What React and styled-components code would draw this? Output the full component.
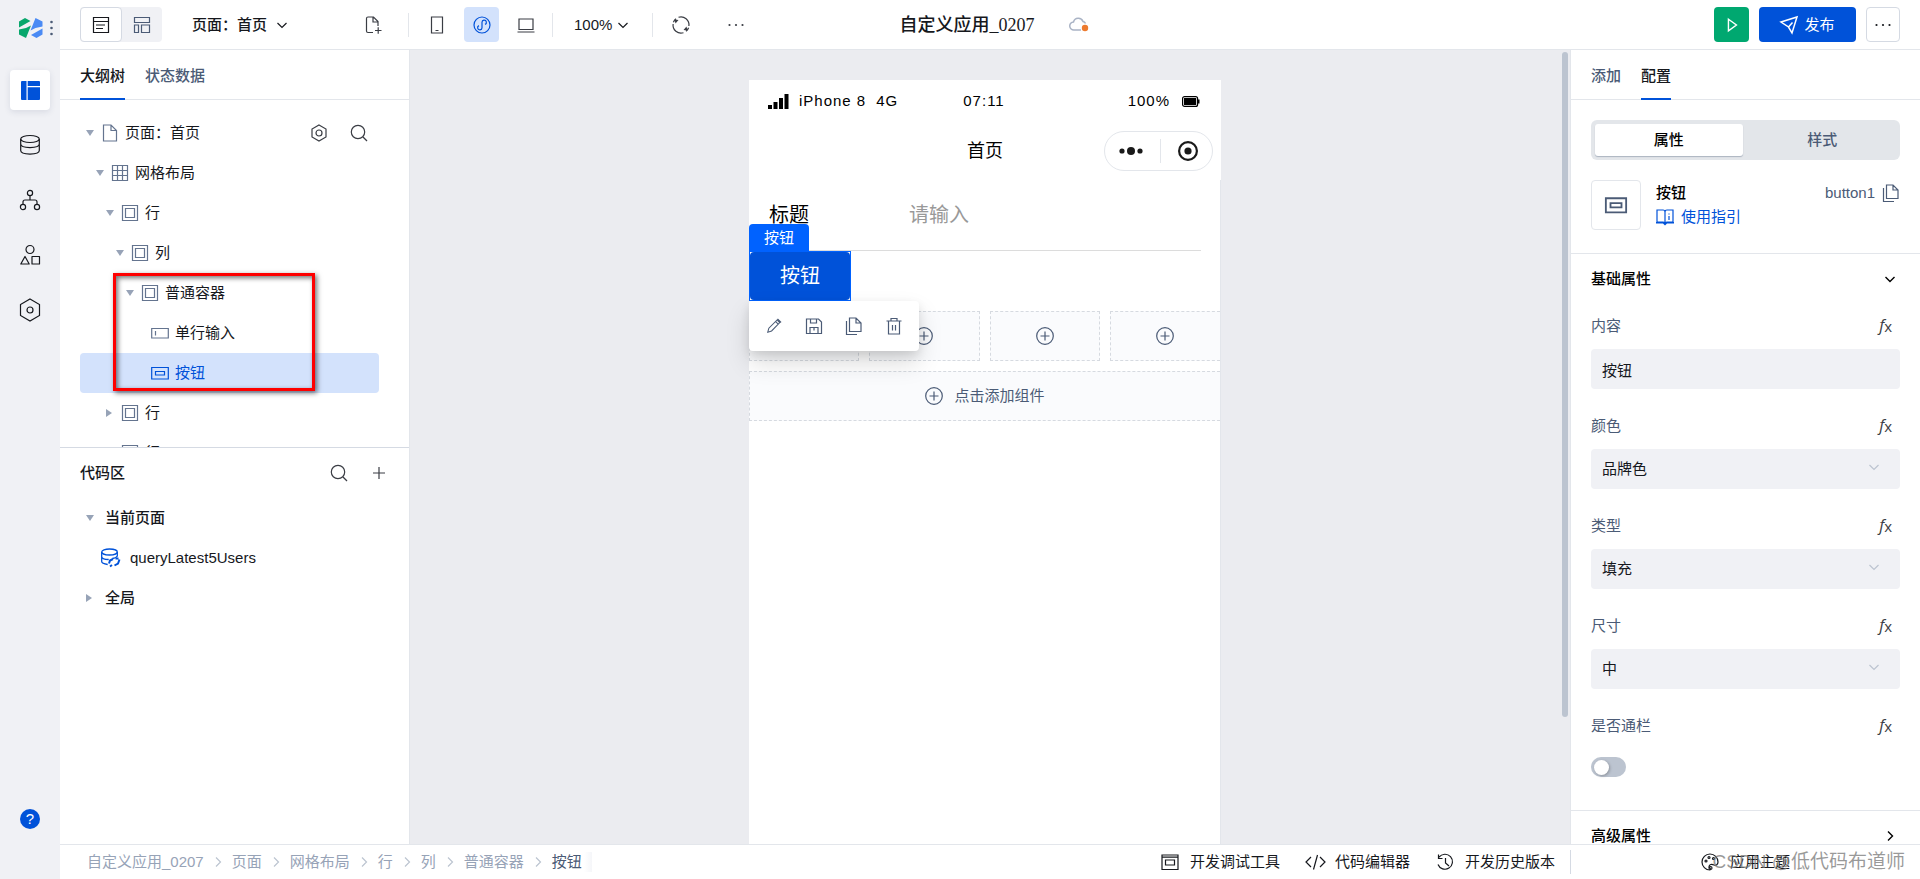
import React, { useState } from "react"
import styled, { createGlobalStyle, css } from "styled-components"

const blue = "#0052d9"
const ink = "#16181d"
const slate = "#4b5b76"
const line = "#e3e6eb"
const soft = "#f0f1f5"

const GlobalStyle = createGlobalStyle`
  * {
    box-sizing: border-box;
  }
  body {
    margin: 0;
    overflow: hidden;
    background: #fff;
    color: ${ink};
    font: 15px/20px "Liberation Sans", "Noto Sans CJK SC", sans-serif;
  }
  button, input, select {
    font: inherit;
    color: inherit;
  }
  a {
    color: inherit;
    text-decoration: none;
  }
`

/* ---------- icons ---------- */

const Svg = styled.svg`
  display: block;
  flex: none;
  fill: none;
  stroke: currentColor;
  stroke-width: ${props => props.$stroke || 1.2};
  overflow: visible;
`

const shapes = {
  outline: <path d="M1.500 1.500h15v15h-15zM1.500 5.500h15M4 9h9M4 12.500h7" />,
  blocks: <path d="M1.500 1.500h15v5h-15zM1.500 9h4v7.500h-4zM8.500 9h8v7.500h-8z" />,
  down: <path d="M4.500 7l4.500 4.500L13.500 7" />,
  right: <path d="M7 4.500l4.500 4.500L7 13.500" />,
  filePlus: <path d="M9 16.500H4q-1.500 0-1.500-1.500V2.500Q2.500 1 4 1h5.500L14 5.500V10M9 1v5h5M11 14.500h6.500M14.200 11.200v6.500" />,
  phone: <path d="M3.500 1h11v16h-11zM7.500 14.500h3" />,
  mini: <><circle cx="9" cy="9" r="8" /><path d="M9 11.500V6.300a2.200 2.200 0 1 1 3 2.100M9 6.500v5.200a2.200 2.200 0 1 1-3-2.100" /></>,
  laptop: <path d="M2 3h14v10.500H2zM.5 16h17" />,
  refresh: <><path d="M6.500 1.300a8 8 0 0 1 10.400 8.700M11.500 16.700A8 8 0 0 1 1.100 8" /><path d="M4 2.700a8 8 0 0 0-2.600 3.600M14 15.300a8 8 0 0 0 2.600-3.600" /><path d="M2.500 3.500l4 .5-3 3.500zM15.500 14.500l-4-.5 3-3.500z" fill="currentColor" stroke="none" /></>,
  dots: <g fill="currentColor" stroke="none"><circle cx="2.500" cy="9" r="1.100" /><circle cx="9" cy="9" r="1.100" /><circle cx="15.500" cy="9" r="1.100" /></g>,
  play: <path d="M5 2.500L14 9l-9 6.500z" />,
  send: <path d="M1 6L17 1l-5 16-3.500-6zM8.500 11l4-4.500" />,
  panel: <path d="M1 0h4.500v19H1q-1 0-1-1V1q0-1 1-1zM6.700 0H18q1 0 1 1v4H6.700zM6.700 6.200H19V18q0 1-1 1H6.700z" fill="currentColor" stroke="none" />,
  database: <><ellipse cx="10" cy="4" rx="9.300" ry="3.500" /><path d="M.7 4v11.500c0 4.700 18.600 4.700 18.600 0V4M.7 9c0 4.700 18.600 4.700 18.600 0" /></>,
  flow: <><circle cx="10" cy="3" r="2.600" /><circle cx="3" cy="17" r="2.600" /><circle cx="17" cy="17" r="2.600" /><path d="M10 5.600V10M3 14.400V12q0-2 2-2h10q2 0 2 2v2.400" /></>,
  forms: <><circle cx="10" cy="4.500" r="4" /><path d="M5 11.500L.8 19h8.400zM12 11.500h7.500v7.500H12z" strokeLinejoin="round" /></>,
  hex: <><path d="M9 1l7 4v8l-7 4-7-4V5z" /><circle cx="9" cy="9" r="3" /></>,
  bigHex: <><path d="M10-1l9.500 5.500v11L10 21 .5 15.500v-11z" /><circle cx="10" cy="10" r="3" /></>,
  search: <><circle cx="8" cy="8" r="6.700" /><path d="M13 13l4 4" /></>,
  plus: <path d="M9 3v12M3 9h12" />,
  file: <path d="M2.500 1H10l5.500 5.500V17h-13zM10 1v5.500h5.500" />,
  grid: <path d="M1.500 1.500h15v15h-15zM1.500 6.500h15M1.500 11.500h15M6.500 1.500v15M11.500 1.500v15" />,
  box: <path d="M1.500 1.500h15v15h-15zM4.500 4.500h9v9h-9z" />,
  field: <path d="M.7 4.500h16.600v9.500H.7zM4.500 7v4.500" />,
  button: <path d="M.7 3.500h16.600v11.500H.7zM4.500 7.500h9v3.500h-9z" />,
  pencil: <path d="M2 16l1.200-4.500L12.500 2.200l3 3L6.300 14.600zM10.800 4l3 3M13 1l4 4" />,
  save: <path d="M1.500 2h12l3 3v11.500h-15zM5.500 2v4h6V2M5 16.500V10.500h8v6M9 10.500v3" />,
  copy: <path d="M4.500 1H11l5 5v8.500H4.500zM11 1v5h5M1.500 4v13.500H12" />,
  trash: <path d="M1.500 4h15M3.500 4v13h11V4M6 4V1.500h6V4M7.500 8v5.500M10.500 8v5.500" />,
  circlePlus: <><circle cx="9" cy="9" r="8.300" /><path d="M9 4.500v9M4.500 9h9" /></>,
  guide: <><path d="M1 2h6q2 0 2 2 0-2 2-2h6v12h-6q-2 0-2 2 0-2-2-2H1zM9 4v11M13 8v4M13 5.500v1" /><path d="M0 14h18v1.500h-7l-2 2-2-2H0z" fill="currentColor" stroke="none" /></>,
  debug: <path d="M1 2h16v14.500H1zM4.500 7h9v5h-9zM1 4.200h16" />,
  code: <path d="M5 4L0 9l5 5M14 4l5 5-5 5M11.500 2l-4 14.500" />,
  history: <path d="M3 4.200a7.500 7.500 0 1 1-1 7.300M2.500 1.500v4h4M9.500 5v5l3.500 3" />,
  palette: <><path d="M9 1a8 8 0 1 0 0 16c.8-1 .2-2.500-1-3 0-3 3-3 5-2 2 .8 4-.5 4-3A8 8 0 0 0 9 1z" /><circle cx="5" cy="8" r="1" /><circle cx="8" cy="4.500" r="1" /><circle cx="12.500" cy="5.500" r="1" /><circle cx="9.500" cy="15" r="1.500" /></>,
}

const Icon = ({ name, size = 18, stroke, box = 18 }) => (
  <Svg width={size} height={size} viewBox={`0 0 ${box} ${box}`} $stroke={stroke} aria-hidden="true">
    {shapes[name]}
  </Svg>
)

const Logo = () => (
  <svg width="24" height="20" viewBox="0 0 24 20" aria-hidden="true">
    <path d="M0 3.500L6 0l5.500 3L0 9.500zM0 11.500L7 10l5-2.500L7 20l-7-3.500z" fill="#07a76c" />
    <path d="M23.500 16.500L17.500 20 12 17l11.500-6.500zM23.500 8.500l-7 1.500-5 2.500L16.500 0l7 3.500z" fill="#4a8af4" />
  </svg>
)

/* ---------- shell ---------- */

const Shell = styled.div`
  display: flex;
  height: 100vh;
`

const Rail = styled.nav`
  display: flex;
  flex: 0 0 60px;
  flex-direction: column;
  align-items: center;
  gap: 15px;
  padding-bottom: 40px;
  background: ${soft};
`

const Brand = styled.div`
  display: flex;
  align-items: center;
  align-self: stretch;
  gap: 7px;
  height: 55px;
  padding-left: 19px;
`

const RailButton = styled.button`
  display: grid;
  place-items: center;
  width: 40px;
  height: 40px;
  padding: 0;
  border: 0;
  border-radius: 4px;
  background: ${props => (props.$active ? "#fff" : "transparent")};
  box-shadow: ${props => (props.$active ? "0 2px 6px rgba(40, 60, 100, 0.12)" : "none")};
  color: ${props => (props.$active ? blue : ink)};
`

const HelpButton = styled(RailButton)`
  margin-top: auto;
  span {
    width: 20px;
    height: 20px;
    border-radius: 50%;
    background: ${blue};
    color: #fff;
  }
`

const Main = styled.div`
  display: flex;
  flex: 1;
  flex-direction: column;
  min-width: 0;
`

const Workspace = styled.div`
  display: flex;
  flex: 1;
  min-height: 0;
`

/* ---------- top bar ---------- */

const TopBar = styled.header`
  display: grid;
  grid-template-columns: 1fr auto 1fr;
  align-items: center;
  height: 50px;
  padding: 0 20px;
  border-bottom: 1px solid ${line};
`

const Tools = styled.div`
  display: flex;
  align-items: center;
  justify-content: ${props => (props.$end ? "flex-end" : "flex-start")};
  gap: ${props => props.$gap || 0}px;
`

const ViewSwitch = styled.div`
  display: flex;
  margin-right: 30px;
  border-radius: 4px;
  background: ${soft};
`

const ToolButton = styled.button`
  display: flex;
  align-items: center;
  justify-content: center;
  gap: 6px;
  width: ${props => props.$width || 35}px;
  height: 35px;
  padding: 0;
  border: 1px solid ${props => (props.$framed ? "#d5dae3" : "transparent")};
  border-radius: 4px;
  background: ${props => props.$fill || "transparent"};
  color: ${props => props.$color || ink};
`

const MenuButton = styled.button`
  display: flex;
  align-items: center;
  gap: ${props => props.$gap}px;
  padding: 0;
  border: 0;
  background: none;
  font-weight: ${props => (props.$strong ? 500 : 400)};
`

const Divider = styled.span`
  width: 1px;
  height: 24px;
  margin: 0 ${props => props.$right || 0}px 0 ${props => props.$left || 0}px;
  background: ${line};
`

const Spacer = styled.span`
  flex: 0 1 70px;
`

const Title = styled.h1`
  display: flex;
  align-items: center;
  gap: 34px;
  margin: 0;
  padding-left: 8px;
  font-family: "Liberation Serif", "Noto Sans CJK SC", serif;
  font-size: 18px;
  font-weight: 500;
`

/* ---------- outline panel ---------- */

const LeftPanel = styled.aside`
  display: flex;
  flex: 0 0 350px;
  flex-direction: column;
  border-right: 1px solid ${line};
`

const PanelHalf = styled.section`
  display: flex;
  flex: 1 1 0;
  flex-direction: column;
  min-height: 0;
  overflow: hidden;
  & + & {
    border-top: 1px solid #d5dae3;
  }
`

const Tabs = styled.div`
  display: flex;
  flex: none;
  gap: 20px;
  height: 50px;
  padding: 0 20px;
  border-bottom: 1px solid ${line};
`

const Tab = styled.button`
  height: 50px;
  padding: 4px 0 0;
  border: 0;
  border-bottom: 2px solid ${props => (props.$active ? blue : "transparent")};
  background: none;
  color: ${props => (props.$active ? ink : slate)};
  font-weight: 500;
`

const Tree = styled.ul`
  position: relative;
  margin: 0;
  padding: ${props => props.$top || 0}px 30px 0 20px;
  list-style: none;
`

const TreeRow = styled.li`
  display: flex;
  align-items: center;
  height: 40px;
  padding-left: ${props => 5 + props.$level * 10}px;
  padding-right: 8px;
  border-radius: 4px;
  color: ${props => (props.$selected ? blue : ink)};
  font-weight: ${props => (props.$strong ? 500 : 400)};
  ${props => props.$selected && css`
    background: #d3e2fc;
  `}
`

const RowIcon = styled.span`
  display: grid;
  place-items: center;
  width: 18px;
  margin: 0 6px;
  color: ${props => (props.$selected ? blue : "#64748f")};
`

const RowLabel = styled.span`
  flex: 1;
  margin-left: ${props => props.$indent || 0}px;
`

const Caret = styled.span`
  flex: none;
  width: 0;
  margin: 0 1px;
  border: solid transparent;
  border-width: 6px 4px 0;
  border-top-color: #97a3b7;
  ${props => props.$state === "closed" && css`
    margin: 0 3px 0 1px;
    border-width: 4px 0 4px 6px;
    border-color: transparent transparent transparent #97a3b7;
  `}
  ${props => props.$state === "leaf" && css`
    visibility: hidden;
  `}
`

const IconButton = styled.button`
  display: grid;
  place-items: center;
  width: ${props => props.$size || 24}px;
  height: 24px;
  padding: 0;
  border: 0;
  background: none;
  color: ${props => props.$color || "#3a3d44"};
  & + & {
    margin-left: 16px;
  }
`

/* annotation frame laid over the container and its children */
const Highlight = styled.div`
  position: absolute;
  top: 173px;
  left: 53px;
  width: 202px;
  height: 118px;
  border: 3px solid #fe0000;
  box-shadow: 2px 2px 5px rgba(0, 0, 0, 0.55), inset 2px 2px 5px rgba(0, 0, 0, 0.55);
  pointer-events: none;
`

const CodeHeader = styled.div`
  display: flex;
  align-items: center;
  height: 50px;
  padding: 0 18px 0 20px;
`

const Heading = styled.h2`
  flex: 1;
  margin: 0;
  font-size: 15px;
  font-weight: 500;
`

/* ---------- canvas ---------- */

const Canvas = styled.main`
  display: flex;
  flex: 1;
  min-width: 0;
  background: #ebecf0;
`

const Stage = styled.div`
  display: flex;
  flex: 1;
  justify-content: center;
  padding-top: 30px;
`

const ScrollTrack = styled.div`
  flex: 0 0 10px;
  padding: 2px 2px 0;
  &::before {
    content: "";
    display: block;
    height: 84%;
    border-radius: 3px;
    background: #bcc4d0;
  }
`

const Phone = styled.div`
  display: flex;
  flex: 0 0 472px;
  flex-direction: column;
  background: #fff;
  color: #000;
`

const StatusBar = styled.div`
  display: grid;
  grid-template-columns: 1fr auto 1fr;
  align-items: center;
  height: 42px;
  padding: 0 21px 0 19px;
  letter-spacing: 1px;
`

const NavBar = styled.div`
  display: grid;
  grid-template-columns: 1fr auto 1fr;
  align-items: center;
  height: 58px;
  padding: 0 8px;
  font-size: 18px;
  &::before {
    content: "";
  }
`

const Capsule = styled.div`
  display: flex;
  align-items: center;
  justify-content: space-between;
  justify-self: end;
  width: 109px;
  height: 40px;
  padding: 0 14px;
  border: 1px solid ${line};
  border-radius: 20px;
`

const Screen = styled.div`
  flex: 1;
  border-right: 1px solid ${line};
`

const FormItem = styled.div`
  display: flex;
  align-items: center;
  height: 71px;
  margin: 0 19px 0 20px;
  border-bottom: 1px solid #dcdcdc;
  font-size: 20px;
  label {
    flex: 0 0 140px;
  }
  input {
    flex: 1;
    min-width: 0;
    padding: 0;
    border: 0;
    outline: 0;
    background: none;
  }
  input::placeholder {
    color: #999;
  }
`

const Selection = styled.div`
  position: relative;
  width: 102px;
  height: 50px;
  border: 1px solid #0062ff;
`

const PreviewButton = styled.button`
  width: 100%;
  height: 100%;
  border: 0;
  border-radius: 4px;
  background: ${blue};
  color: #fff;
  font-size: 20px;
`

const SelectionTag = styled.span`
  position: absolute;
  bottom: 100%;
  left: -1px;
  padding: 4px 15px;
  border-radius: 4px 4px 0 0;
  background: #0062ff;
  color: #fff;
  white-space: nowrap;
`

const FloatingBar = styled.div`
  position: absolute;
  top: 49px;
  left: -1px;
  z-index: 1;
  display: flex;
  align-items: center;
  justify-content: space-between;
  width: 170px;
  height: 50px;
  padding: 0 13px;
  border-radius: 4px;
  background: #fff;
  box-shadow: 0 12px 24px rgba(0, 0, 0, 0.14), 0 4px 10px rgba(0, 0, 0, 0.1);
  ${IconButton} {
    margin-left: 0;
  }
`

const Slots = styled.div`
  display: grid;
  grid-template-columns: repeat(4, 1fr);
  gap: 10px;
  margin-top: 10px;
`

const Slot = styled.button`
  display: flex;
  align-items: center;
  justify-content: center;
  gap: 11px;
  width: 100%;
  height: 50px;
  padding: 0;
  border: 1px dashed #d6dae0;
  background: #fafbfd;
  color: ${slate};
  &:last-child {
    border-right: 0;
  }
`

const WideSlot = styled(Slot)`
  margin-top: 10px;
`

/* ---------- settings panel ---------- */

const RightPanel = styled.aside`
  display: flex;
  flex: 0 0 350px;
  flex-direction: column;
  border-left: 1px solid ${line};
  overflow: hidden;
`

const PanelBody = styled.div`
  flex: 1;
  min-height: 0;
  overflow: hidden;
`

const Segments = styled.div`
  display: grid;
  grid-template-columns: 1fr 1fr;
  gap: 6px;
  margin: 20px;
  padding: 4px;
  border-radius: 6px;
  background: #e3e6ea;
`

const Segment = styled.button`
  height: 32px;
  padding: 0;
  border: 0;
  border-radius: 3px;
  background: ${props => (props.$active ? "#fff" : "transparent")};
  box-shadow: ${props => (props.$active ? "0 1px 1px rgba(70, 85, 115, 0.35)" : "none")};
  color: ${props => (props.$active ? "#000" : slate)};
  font-weight: 500;
`

const WidgetCard = styled.div`
  display: flex;
  margin: 0 20px 23px;
`

const WidgetThumb = styled.div`
  display: grid;
  place-items: center;
  width: 50px;
  height: 50px;
  margin-right: 15px;
  border: 1px solid ${line};
  border-radius: 4px;
  color: ${slate};
`

const WidgetInfo = styled.div`
  flex: 1;
  padding-top: 3px;
  strong {
    display: block;
    color: #000;
    font-weight: 500;
  }
  a {
    display: flex;
    align-items: center;
    gap: 7px;
    margin-top: 4px;
    color: ${blue};
  }
`

const WidgetId = styled.div`
  display: flex;
  align-items: center;
  height: 26px;
  gap: 7px;
  color: ${slate};
`

const Section = styled.section`
  padding: 0 20px 10px;
  border-top: 1px solid ${line};
`

const SectionToggle = styled.button`
  display: flex;
  align-items: center;
  justify-content: space-between;
  width: 100%;
  height: 50px;
  padding: 0 1px 0 0;
  border: 0;
  background: none;
  color: #000;
  font-weight: 500;
`

const Field = styled.div`
  padding: 12px 0 15px;
`

const FieldHead = styled.div`
  display: flex;
  justify-content: space-between;
  height: 20px;
  margin-bottom: 13px;
  padding-right: 8px;
  color: ${slate};
`

const FxButton = styled.button`
  display: flex;
  padding: 0;
  border: 0;
  background: none;
  color: #3a3d44;
  font: italic 16px/18px "Open Sans", sans-serif;
  sub {
    font-size: 15px;
    font-style: normal;
    line-height: 20px;
  }
`

const boxStyle = css`
  display: block;
  width: 100%;
  height: 40px;
  padding: 0 11px;
  border: 0;
  border-radius: 4px;
  outline: 0;
  appearance: none;
  background: ${soft};
`

const TextBox = styled.input`
  ${boxStyle}
`

const SelectWrap = styled.div`
  position: relative;
  color: #bcc4d0;
  select {
    ${boxStyle}
    color: ${ink};
  }
  svg {
    position: absolute;
    top: 9px;
    right: 17px;
    pointer-events: none;
  }
`

const SwitchRow = styled.div`
  display: flex;
  align-items: center;
  height: 36px;
`

const Switch = styled.input`
  appearance: none;
  width: 35px;
  height: 20px;
  margin: 0;
  padding: 3px;
  border-radius: 10px;
  background: #bcc4d0;
  &::before {
    content: "";
    display: block;
    width: 15px;
    height: 15px;
    border-radius: 50%;
    background: #fff;
    box-shadow: 1px 1px 3px rgba(0, 0, 0, 0.25);
  }
  &:checked {
    background: ${blue};
  }
  &:checked::before {
    margin-left: auto;
  }
`

/* ---------- footer ---------- */

const Footer = styled.footer`
  position: relative;
  display: flex;
  flex: 0 0 35px;
  align-items: center;
  border-top: 1px solid ${line};
`

const Crumbs = styled.nav`
  display: flex;
  flex: 1;
  align-items: center;
  padding-left: 27px;
  color: #97a3b7;
  svg {
    margin: 0 5px;
    color: #bcc4d0;
  }
`

const Crumb = styled.a`
  ${props => props.$current && css`
    padding-right: 10px;
    background: linear-gradient(to right, #fff 80%, #f5f6f9);
    color: ${slate};
  `}
`

const FooterTools = styled.div`
  display: flex;
  gap: 26px;
  padding-right: 15px;
`

const FooterButton = styled.button`
  display: flex;
  align-items: center;
  gap: 11px;
  padding: 0;
  border: 0;
  background: none;
`

const ThemeSlot = styled.div`
  display: flex;
  flex: 0 0 350px;
  justify-content: center;
  border-left: 1px solid #d5dae3;
  line-height: 24px;
`

const Watermark = styled.span`
  position: absolute;
  right: 15px;
  color: rgba(120, 120, 120, 0.75);
  font-size: 19px;
  pointer-events: none;
`

const nodes = [
  { level: 0, icon: "file", label: "页面：首页", state: "open" },
  { level: 1, icon: "grid", label: "网格布局", state: "open" },
  { level: 2, icon: "box", label: "行", state: "open" },
  { level: 3, icon: "box", label: "列", state: "open" },
  { level: 4, icon: "box", label: "普通容器", state: "open" },
  { level: 5, icon: "field", label: "单行输入", state: "leaf" },
  { level: 5, icon: "button", label: "按钮", state: "leaf", selected: true },
  { level: 2, icon: "box", label: "行", state: "closed" },
  { level: 2, icon: "box", label: "行", state: "closed" },
]

const rail = [
  ["database", "数据源"],
  ["flow", "流程"],
  ["forms", "素材"],
  ["bigHex", "设置"],
]

const selects = [
  { id: "color", label: "颜色", options: ["品牌色"] },
  { id: "type", label: "类型", options: ["填充"] },
  { id: "size", label: "尺寸", options: ["中"] },
]

const crumbs = ["自定义应用_0207", "页面", "网格布局", "行", "列", "普通容器", "按钮"]

const SideRail = () => (
  <Rail>
    <Brand>
      <Logo />
      <svg width="3" height="16" viewBox="0 0 3 16" fill={slate} aria-hidden="true">
        <circle cx="1.5" cy="2" r="1.3" />
        <circle cx="1.5" cy="8" r="1.3" />
        <circle cx="1.5" cy="14" r="1.3" />
      </svg>
    </Brand>
    <RailButton $active aria-label="页面">
      <Icon name="panel" size={19} box={19} />
    </RailButton>
    {rail.map(([name, label]) => (
      <RailButton key={name} aria-label={label}>
        <Icon name={name} size={20} box={20} />
      </RailButton>
    ))}
    <HelpButton><span>?</span></HelpButton>
  </Rail>
)

const Header = () => (
  <TopBar>
    <Tools>
      <ViewSwitch>
        <ToolButton $width={42} $framed $fill="#fff" aria-label="大纲"><Icon name="outline" /></ToolButton>
        <ToolButton $width={40} $color={slate} aria-label="布局"><Icon name="blocks" /></ToolButton>
      </ViewSwitch>
      <MenuButton $strong $gap={6}>页面：首页<Icon name="down" /></MenuButton>
      <Spacer />
      <IconButton aria-label="新建页面"><Icon name="filePlus" /></IconButton>
      <Divider $left={23} $right={16} />
      <Tools $gap={15}>
        <IconButton aria-label="手机"><Icon name="phone" /></IconButton>
        <ToolButton $fill="#d3e2fc" $color={blue} aria-label="小程序"><Icon name="mini" /></ToolButton>
        <IconButton aria-label="电脑"><Icon name="laptop" /></IconButton>
      </Tools>
      <Divider $left={14} $right={21} />
      <MenuButton $gap={2}>100%<Icon name="down" /></MenuButton>
      <Divider $left={20} $right={16} />
      <Tools $gap={15}>
        <IconButton aria-label="刷新"><Icon name="refresh" /></IconButton>
        <IconButton aria-label="更多"><Icon name="dots" /></IconButton>
      </Tools>
    </Tools>
    <Title>
      自定义应用_0207
      <svg width="20" height="15" viewBox="0 0 20 15" aria-hidden="true">
        <path d="M12 13H5a4 4 0 0 1-.5-8 5 5 0 0 1 9.500-.500 3.500 3.500 0 0 1 2.500 2" fill="none" stroke="#a9b3c5" strokeWidth="1.500" />
        <circle cx="16" cy="11" r="3.200" fill="#ed7b2f" />
      </svg>
    </Title>
    <Tools $end $gap={10}>
      <ToolButton $fill="#00a870" $color="#fff" aria-label="预览"><Icon name="play" size={16} stroke={1.6} /></ToolButton>
      <ToolButton $width={97} $fill={blue} $color="#fff"><Icon name="send" stroke={1.5} />发布</ToolButton>
      <ToolButton $width={34} $framed $fill="#fff" aria-label="更多操作"><Icon name="dots" /></ToolButton>
    </Tools>
  </TopBar>
)

const Outline = () => (
  <LeftPanel>
    <PanelHalf>
      <Tabs>
        <Tab $active>大纲树</Tab>
        <Tab>状态数据</Tab>
      </Tabs>
      <Tree $top={13}>
        {nodes.map((node, i) => (
          <TreeRow key={i} $level={node.level} $selected={node.selected}>
            <Caret $state={node.state} />
            <RowIcon $selected={node.selected}><Icon name={node.icon} /></RowIcon>
            <RowLabel>{node.label}</RowLabel>
            {i === 0 && (
              <>
                <IconButton aria-label="页面设置"><Icon name="hex" /></IconButton>
                <IconButton aria-label="搜索组件"><Icon name="search" /></IconButton>
              </>
            )}
          </TreeRow>
        ))}
        <Highlight />
      </Tree>
    </PanelHalf>
    <PanelHalf>
      <CodeHeader>
        <Heading>代码区</Heading>
        <IconButton aria-label="搜索代码"><Icon name="search" /></IconButton>
        <IconButton aria-label="新建代码"><Icon name="plus" /></IconButton>
      </CodeHeader>
      <Tree>
        <TreeRow $level={0} $strong><Caret /><RowLabel $indent={10}>当前页面</RowLabel></TreeRow>
        <TreeRow $level={0}>
          <Caret $state="leaf" />
          <RowIcon $selected>
            <Svg width="19" height="19" viewBox="0 0 19 19" $stroke={1.3} aria-hidden="true">
              <ellipse cx="8.500" cy="4" rx="7.800" ry="3" />
              <path d="M.7 4v9.500q0 2 6 3M.7 8.500q0 3 7 3M16.300 4v4q-1 2-5 2.500" />
              <path d="M8 15.500l1-3 3-1.500M9 18.500l2-1.500M18.500 11.500l-1.500 4-3.500 2M17.500 10.500h-3" strokeWidth="2" />
            </Svg>
          </RowIcon>
          <RowLabel $indent={5}>queryLatest5Users</RowLabel>
        </TreeRow>
        <TreeRow $level={0} $strong><Caret $state="closed" /><RowLabel $indent={10}>全局</RowLabel></TreeRow>
      </Tree>
    </PanelHalf>
  </LeftPanel>
)

const Preview = () => (
  <Canvas>
    <Stage>
      <Phone>
        <StatusBar>
          <Tools $gap={10}>
            <svg width="21" height="15" viewBox="0 0 21 15" aria-hidden="true">
              <path d="M0 11h4v4H0zM5.500 8h4v7h-4zM11 4h4v11h-4zM16.500 0h4v15h-4z" />
            </svg>
            <span>iPhone 8</span>
            <span>4G</span>
          </Tools>
          <span>07:11</span>
          <Tools $end $gap={12}>
            <span>100%</span>
            <svg width="18" height="11" viewBox="0 0 18 11" aria-hidden="true">
              <rect x=".6" y=".6" width="15" height="9.800" rx="2" fill="none" stroke="#000" strokeWidth="1.200" />
              <path d="M2 2h12.200v7H2zM16 3.500h1.500v4H16z" />
            </svg>
          </Tools>
        </StatusBar>
        <NavBar>
          <span>首页</span>
          <Capsule>
            <svg width="24" height="10" viewBox="0 0 24 10" fill="#1a1a1a" aria-hidden="true">
              <circle cx="3" cy="5" r="2.600" />
              <circle cx="12" cy="5" r="4" />
              <circle cx="21" cy="5" r="2.600" />
            </svg>
            <Divider />
            <svg width="20" height="20" viewBox="0 0 20 20" aria-hidden="true">
              <circle cx="10" cy="10" r="8.900" fill="none" stroke="#1a1a1a" strokeWidth="2.200" />
              <circle cx="10" cy="10" r="3.600" fill="#1a1a1a" />
            </svg>
          </Capsule>
        </NavBar>
        <Screen>
          <FormItem>
            <label htmlFor="preview-input">标题</label>
            <input id="preview-input" placeholder="请输入" />
          </FormItem>
          <Selection>
            <SelectionTag>按钮</SelectionTag>
            <PreviewButton>按钮</PreviewButton>
            <FloatingBar>
              <IconButton $color={slate} aria-label="编辑"><Icon name="pencil" size={16} /></IconButton>
              <IconButton $color={slate} aria-label="保存"><Icon name="save" /></IconButton>
              <IconButton $color={slate} aria-label="复制"><Icon name="copy" /></IconButton>
              <IconButton $color={slate} aria-label="删除"><Icon name="trash" /></IconButton>
            </FloatingBar>
          </Selection>
          <Slots>
            {[1, 2, 3, 4].map(n => (
              <Slot key={n} aria-label="添加组件"><Icon name="circlePlus" /></Slot>
            ))}
          </Slots>
          <WideSlot><Icon name="circlePlus" />点击添加组件</WideSlot>
        </Screen>
      </Phone>
    </Stage>
    <ScrollTrack />
  </Canvas>
)

const FieldTitle = ({ id, children }) => (
  <FieldHead>
    <label htmlFor={id}>{children}</label>
    <FxButton>f<sub>x</sub></FxButton>
  </FieldHead>
)

const Settings = () => {
  const [content, setContent] = useState("按钮")

  return (
    <RightPanel>
      <Tabs>
        <Tab>添加</Tab>
        <Tab $active>配置</Tab>
      </Tabs>
      <PanelBody>
        <Segments>
          <Segment $active>属性</Segment>
          <Segment>样式</Segment>
        </Segments>
        <WidgetCard>
          <WidgetThumb><Icon name="button" size={22} stroke={1.5} /></WidgetThumb>
          <WidgetInfo>
            <strong>按钮</strong>
            <a href="#guide"><Icon name="guide" />使用指引</a>
          </WidgetInfo>
          <WidgetId>
            button1
            <IconButton $size={18} $color={slate} aria-label="复制标识"><Icon name="copy" /></IconButton>
          </WidgetId>
        </WidgetCard>
        <Section>
          <SectionToggle>基础属性<Icon name="down" stroke={1.4} /></SectionToggle>
          <Field>
            <FieldTitle id="content">内容</FieldTitle>
            <TextBox id="content" value={content} onChange={e => setContent(e.target.value)} />
          </Field>
          {selects.map(item => (
            <Field key={item.id}>
              <FieldTitle id={item.id}>{item.label}</FieldTitle>
              <SelectWrap>
                <select id={item.id}>
                  {item.options.map(option => <option key={option}>{option}</option>)}
                </select>
                <Icon name="down" />
              </SelectWrap>
            </Field>
          ))}
          <Field>
            <FieldTitle id="block">是否通栏</FieldTitle>
            <SwitchRow><Switch type="checkbox" id="block" /></SwitchRow>
          </Field>
        </Section>
        <Section>
          <SectionToggle>高级属性<Icon name="right" stroke={1.4} /></SectionToggle>
        </Section>
      </PanelBody>
    </RightPanel>
  )
}

const BottomBar = () => (
  <Footer>
    <Crumbs>
      {crumbs.map((text, i) => (
        <React.Fragment key={text}>
          {i > 0 && <Icon name="right" />}
          <Crumb href="#" $current={i === crumbs.length - 1}>{text}</Crumb>
        </React.Fragment>
      ))}
    </Crumbs>
    <FooterTools>
      <FooterButton><Icon name="debug" />开发调试工具</FooterButton>
      <FooterButton><Icon name="code" />代码编辑器</FooterButton>
      <FooterButton><Icon name="history" />开发历史版本</FooterButton>
    </FooterTools>
    <ThemeSlot>
      <FooterButton><Icon name="palette" />应用主题</FooterButton>
    </ThemeSlot>
    <Watermark>CSDN @低代码布道师</Watermark>
  </Footer>
)

const App = () => (
  <>
    <GlobalStyle />
    <Shell>
      <SideRail />
      <Main>
        <Header />
        <Workspace>
          <Outline />
          <Preview />
          <Settings />
        </Workspace>
        <BottomBar />
      </Main>
    </Shell>
  </>
)

export default App
